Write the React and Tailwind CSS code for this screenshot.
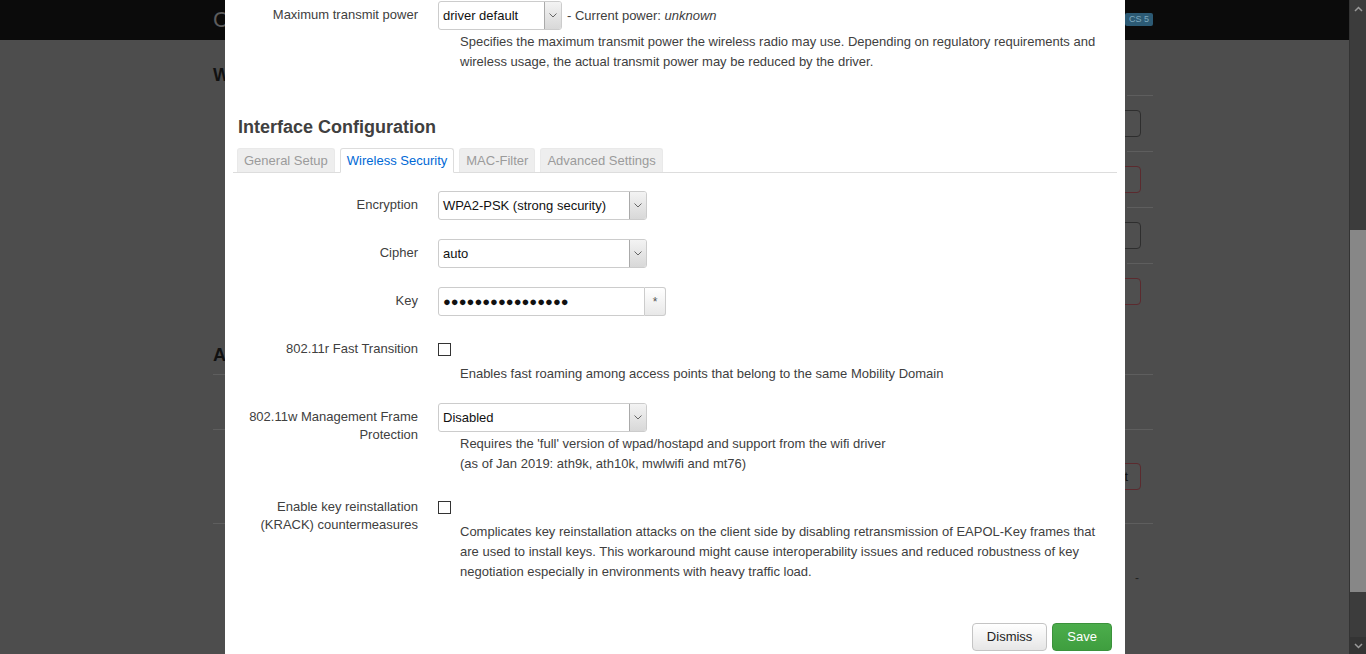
import React from "react";

function Chevron() {
  return (
    <svg width="8" height="5" viewBox="0 0 8 5">
      <path d="M0.5 0.5 L4 4 L7.5 0.5" fill="none" stroke="#666" strokeWidth="1" />
    </svg>
  );
}

function Select({ value, w }) {
  return (
    <div className={`flex h-[29px] ${w} border border-[#ccc] rounded-[3px] bg-white`}>
      <div className="flex-1 px-[4px] leading-[27px] text-[13px] text-[#111] whitespace-nowrap overflow-hidden">
        {value}
      </div>
      <div className="w-[17px] flex items-center justify-center border-l border-[#aaa] bg-linear-to-b from-[#f3f3f3] to-[#d8d8d8] rounded-r-[2px]">
        <Chevron />
      </div>
    </div>
  );
}

function Checkbox() {
  return <div className="w-[13px] h-[13px] border border-[#333] bg-white" />;
}

function Row({ label, children }) {
  return (
    <div className="flex">
      <div className="w-[193px] shrink-0 pl-[10px] text-right pt-[5px] leading-[18px] text-[13px] text-[#404040]">
        {label}
      </div>
      <div className="ml-[20px] w-[679px]">{children}</div>
    </div>
  );
}

function Desc({ children, className = "" }) {
  return (
    <div className={`pl-[22px] leading-[20px] text-[13px] text-[#404040] ${className}`}>{children}</div>
  );
}

function Tab({ children, active }) {
  return active ? (
    <li className="h-[25px] -mb-[1px] px-[6px] leading-[23px] border border-[#ddd] border-b-white bg-white rounded-t-[3px] text-[#0069d6] whitespace-nowrap">
      {children}
    </li>
  ) : (
    <li className="h-[24px] px-[6px] leading-[23px] border border-[#e9e9e9] border-b-0 bg-[#eee] rounded-t-[3px] text-[#9b9b9b] whitespace-nowrap">
      {children}
    </li>
  );
}

function BgButton({ red, label }) {
  return (
    <div
      className={
        red
          ? "h-[27px] w-[80px] border border-[#5b2a2e] rounded-[4px] bg-[#4f4f4f] text-right pr-[12px] leading-[25px] text-[13px] text-[#111]"
          : "h-[27px] w-[80px] border border-[#2e2e2e] rounded-[4px] bg-[#4f4f4f] text-right pr-[12px] leading-[25px] text-[13px] text-[#111]"
      }
    >
      {label}
    </div>
  );
}

function BgRow({ h, children, full }) {
  return (
    <div className={`${h} relative flex items-center justify-end pr-[12px]`}>
      <div
        className={
          full
            ? "absolute top-0 left-0 right-0 border-t border-[#5e5e5e]"
            : "absolute top-0 right-0 w-[26px] border-t border-[#5e5e5e]"
        }
      />
      {children}
    </div>
  );
}

export default function App() {
  return (
    <div className="relative flex w-[1366px] h-[654px] overflow-hidden bg-[#4d4d4d] font-['Liberation_Sans',Arial,sans-serif]">
      {/* background page (dimmed) */}
      <div className="w-[1349px] shrink-0">
        <header className="h-[40px] bg-[#0b0b0b]">
          <div className="ml-[213px] w-[940px] h-full flex items-center justify-between">
            <span className="text-[22px] text-[#5c5c5c] leading-[40px]">C</span>
            <span className="h-[13px] px-[4px] bg-[#2c5a74] text-[9px] text-[#7fa9bf] leading-[13px] rounded-[2px] mt-[-2px]">
              CS 5
            </span>
          </div>
        </header>
        <div className="ml-[213px] w-[940px]">
          <h2 className="pt-[23px] text-[18px] font-bold leading-[24px] text-[#111]">W</h2>
          <div className="mt-[8px]">
            <BgRow h="h-[56px]">
              <BgButton />
            </BgRow>
            <BgRow h="h-[56px]">
              <BgButton red />
            </BgRow>
            <BgRow h="h-[56px]">
              <BgButton />
            </BgRow>
            <BgRow h="h-[56px]">
              <BgButton red />
            </BgRow>
          </div>
          <h2 className="mt-[24px] text-[18px] font-bold leading-[24px] text-[#111]">A</h2>
          <div className="mt-[7px]">
            <BgRow full h="h-[55px]" />
            <BgRow full h="h-[94px]">
              <BgButton red label="t" />
            </BgRow>
            <BgRow full h="h-[110px]">
              <span className="text-[#222] text-[12px] pr-[2px]">-</span>
            </BgRow>
          </div>
        </div>
      </div>

      {/* scrollbar */}
      <div className="w-[17px] h-full flex flex-col bg-[#3c3c3c] border-l border-[#333]">
        <div className="h-[17px] flex items-center justify-center">
          <svg width="9" height="6" viewBox="0 0 9 6">
            <path d="M1 5 L4.5 1.5 L8 5" fill="none" stroke="#9a9a9a" strokeWidth="1.5" />
          </svg>
        </div>
        <div className="flex-1 flex flex-col">
          <div className="h-[213px]" />
          <div className="h-[362px] bg-[#878787]" />
        </div>
        <div className="h-[17px] flex items-center justify-center bg-[#343434]">
          <svg width="9" height="6" viewBox="0 0 9 6">
            <path d="M1 1 L4.5 4.5 L8 1" fill="none" stroke="#9a9a9a" strokeWidth="1.5" />
          </svg>
        </div>
      </div>

      {/* modal */}
      <div className="absolute left-[225px] top-0 w-[900px] h-[654px] bg-white text-[13px] text-[#404040]">
        <div className="pt-[1px]">
          <Row label="Maximum transmit power">
            <div className="flex items-center">
              <Select value="driver default" w="w-[124px]" />
              <span className="ml-[5px]">
                - Current power: <em>unknown</em>
              </span>
            </div>
            <Desc className="mt-[2px]">
              Specifies the maximum transmit power the wireless radio may use. Depending on regulatory requirements and
              wireless usage, the actual transmit power may be reduced by the driver.
            </Desc>
          </Row>
        </div>

        <h3 className="mt-[43px] ml-[13px] text-[18px] font-bold leading-[24px] text-[#404040]">
          Interface Configuration
        </h3>

        <ul className="mt-[9px] mx-[8px] h-[25px] flex items-end gap-[5px] pl-[4px] border-b border-[#ddd]">
          <Tab>General Setup</Tab>
          <Tab active>Wireless Security</Tab>
          <Tab>MAC-Filter</Tab>
          <Tab>Advanced Settings</Tab>
        </ul>

        <div className="pt-[18px] flex flex-col gap-[19px]">
          <Row label="Encryption">
            <Select value="WPA2-PSK (strong security)" w="w-[209px]" />
          </Row>
          <Row label="Cipher">
            <Select value="auto" w="w-[209px]" />
          </Row>
          <Row label="Key">
            <div className="flex h-[29px]">
              <div className="w-[207px] border border-[#ccc] rounded-l-[3px] px-[4px] leading-[27px] text-[13px] text-[#111]">
                ●●●●●●●●●●●●●●●●
              </div>
              <div className="w-[21px] border border-l-0 border-[#ccc] rounded-r-[3px] bg-linear-to-b from-white to-[#e8e8e8] flex items-center justify-center text-[12px] text-[#555]">
                *
              </div>
            </div>
          </Row>
          <Row label="802.11r Fast Transition">
            <div className="h-[29px] flex items-center">
              <Checkbox />
            </div>
            <Desc>Enables fast roaming among access points that belong to the same Mobility Domain</Desc>
          </Row>
          <Row label="802.11w Management Frame Protection">
            <Select value="Disabled" w="w-[209px]" />
            <Desc className="mt-[2px]">
              Requires the 'full' version of wpad/hostapd and support from the wifi driver
              <br />
              (as of Jan 2019: ath9k, ath10k, mwlwifi and mt76)
            </Desc>
          </Row>
          <Row label="Enable key reinstallation (KRACK) countermeasures">
            <div className="h-[29px] flex items-center">
              <Checkbox />
            </div>
            <Desc>
              Complicates key reinstallation attacks on the client side by disabling retransmission of EAPOL-Key frames that
              are used to install keys. This workaround might cause interoperability issues and reduced robustness of key
              negotiation especially in environments with heavy traffic load.
            </Desc>
          </Row>
        </div>

        <div className="mt-[41px] flex justify-end gap-[5px] pr-[13px]">
          <button className="h-[28px] px-[14px] border border-[#c4c4c4] rounded-[4px] bg-linear-to-b from-white to-[#e6e6e6] text-[13px] text-[#222]">
            Dismiss
          </button>
          <button className="h-[28px] px-[14px] border border-[#3b923b] rounded-[4px] bg-linear-to-b from-[#4cad4c] to-[#3f9e3f] text-[13px] text-white">
            Save
          </button>
        </div>
      </div>
    </div>
  );
}
